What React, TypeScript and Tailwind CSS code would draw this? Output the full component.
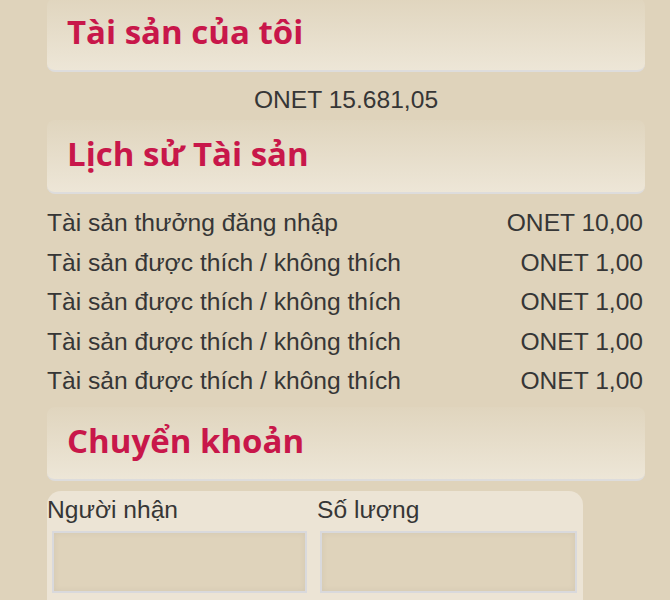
const history = [
  { label: "Tài sản thưởng đăng nhập", amount: "ONET 10,00" },
  { label: "Tài sản được thích / không thích", amount: "ONET 1,00" },
  { label: "Tài sản được thích / không thích", amount: "ONET 1,00" },
  { label: "Tài sản được thích / không thích", amount: "ONET 1,00" },
  { label: "Tài sản được thích / không thích", amount: "ONET 1,00" },
];

function SectionTitle({ children }: { children: React.ReactNode }) {
  return (
    <div className="h-[74px] rounded-lg border-b-2 border-[#dddcdc] bg-gradient-to-b from-[#e0d5be] to-[#ede6d7] pl-5 flex items-center">
      <h2 className="text-[33px] font-bold leading-none text-[#c8174a] font-['Open_Sans',sans-serif] pb-[5px]">
        {children}
      </h2>
    </div>
  );
}

export default function App() {
  return (
    <div className="min-h-screen bg-[#dfd3bb] overflow-hidden font-['Liberation_Sans',Arial,sans-serif] text-[#363636]">
      <div className="ml-[47px] w-[598px] -mt-[2px]">
        <SectionTitle>Tài sản của tôi</SectionTitle>
        <div className="h-[48px] pt-2 flex items-center justify-center text-[24.6px]">
          ONET 15.681,05
        </div>

        <SectionTitle>Lịch sử Tài sản</SectionTitle>
        <div className="pt-[10px] pb-[5px]">
          {history.map((row, i) => (
            <div key={i} className="h-[39.5px] flex items-center justify-between text-[24.6px] pr-[2px]">
              <span>{row.label}</span>
              <span>{row.amount}</span>
            </div>
          ))}
        </div>

        <SectionTitle>Chuyển khoản</SectionTitle>
        <div className="mt-[10px] w-[536px] rounded-t-[14px] bg-[#ece4d5] pb-4">
          <div className="grid grid-cols-2">
            <div>
              <label className="block h-[40px] leading-[38px] text-[24.6px]">Người nhận</label>
              <input className="ml-[5px] w-[255px] h-[62px] border-2 border-[#d9d9dc] bg-[#dfd3bb] shadow-[inset_0_0_6px_rgba(0,0,0,0.06)] outline-none" />
            </div>
            <div>
              <label className="block h-[40px] leading-[38px] text-[24.6px] pl-[2px]">Số lượng</label>
              <input className="ml-[5px] w-[257px] h-[62px] border-2 border-[#d9d9dc] bg-[#dfd3bb] shadow-[inset_0_0_6px_rgba(0,0,0,0.06)] outline-none" />
            </div>
          </div>
        </div>
      </div>
    </div>
  );
}
